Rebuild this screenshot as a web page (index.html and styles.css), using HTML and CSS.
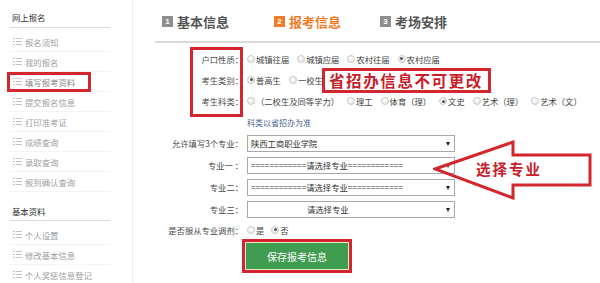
FILE: index.html
```html
<!DOCTYPE html>
<html lang="zh-CN">
<head>
<meta charset="utf-8">
<title>报考信息</title>
<link rel="stylesheet" href="styles.css">
</head>
<body>
<div class="page">
  <aside class="sidebar">
    <div class="side-head">网上报名</div>
    <ul class="side-list">
      <li class="side-item"><span class="si"><svg class="ic" viewBox="0 0 9 7"><rect x="0" y="0" width="2" height="1"/><rect x="0" y="3" width="2" height="1"/><rect x="0" y="6" width="2" height="1"/><rect x="3" y="0" width="6" height="1"/><rect x="3" y="3" width="6" height="1"/><rect x="3" y="6" width="6" height="1"/></svg>报名须知</span></li>
      <li class="side-item"><span class="si"><svg class="ic" viewBox="0 0 9 7"><rect x="0" y="0" width="2" height="1"/><rect x="0" y="3" width="2" height="1"/><rect x="0" y="6" width="2" height="1"/><rect x="3" y="0" width="6" height="1"/><rect x="3" y="3" width="6" height="1"/><rect x="3" y="6" width="6" height="1"/></svg>我的报名</span></li>
      <li class="side-item"><span class="si marked"><svg class="ic" viewBox="0 0 9 7"><rect x="0" y="0" width="2" height="1"/><rect x="0" y="3" width="2" height="1"/><rect x="0" y="6" width="2" height="1"/><rect x="3" y="0" width="6" height="1"/><rect x="3" y="3" width="6" height="1"/><rect x="3" y="6" width="6" height="1"/></svg>填写报考资料</span></li>
      <li class="side-item"><span class="si"><svg class="ic" viewBox="0 0 9 7"><rect x="0" y="0" width="2" height="1"/><rect x="0" y="3" width="2" height="1"/><rect x="0" y="6" width="2" height="1"/><rect x="3" y="0" width="6" height="1"/><rect x="3" y="3" width="6" height="1"/><rect x="3" y="6" width="6" height="1"/></svg>提交报名信息</span></li>
      <li class="side-item"><span class="si"><svg class="ic" viewBox="0 0 9 7"><rect x="0" y="0" width="2" height="1"/><rect x="0" y="3" width="2" height="1"/><rect x="0" y="6" width="2" height="1"/><rect x="3" y="0" width="6" height="1"/><rect x="3" y="3" width="6" height="1"/><rect x="3" y="6" width="6" height="1"/></svg>打印准考证</span></li>
      <li class="side-item"><span class="si"><svg class="ic" viewBox="0 0 9 7"><rect x="0" y="0" width="2" height="1"/><rect x="0" y="3" width="2" height="1"/><rect x="0" y="6" width="2" height="1"/><rect x="3" y="0" width="6" height="1"/><rect x="3" y="3" width="6" height="1"/><rect x="3" y="6" width="6" height="1"/></svg>成绩查询</span></li>
      <li class="side-item"><span class="si"><svg class="ic" viewBox="0 0 9 7"><rect x="0" y="0" width="2" height="1"/><rect x="0" y="3" width="2" height="1"/><rect x="0" y="6" width="2" height="1"/><rect x="3" y="0" width="6" height="1"/><rect x="3" y="3" width="6" height="1"/><rect x="3" y="6" width="6" height="1"/></svg>录取查询</span></li>
      <li class="side-item"><span class="si"><svg class="ic" viewBox="0 0 9 7"><rect x="0" y="0" width="2" height="1"/><rect x="0" y="3" width="2" height="1"/><rect x="0" y="6" width="2" height="1"/><rect x="3" y="0" width="6" height="1"/><rect x="3" y="3" width="6" height="1"/><rect x="3" y="6" width="6" height="1"/></svg>报到确认查询</span></li>
    </ul>
    <div class="side-head second">基本资料</div>
    <ul class="side-list">
      <li class="side-item"><span class="si"><svg class="ic" viewBox="0 0 9 7"><rect x="0" y="0" width="2" height="1"/><rect x="0" y="3" width="2" height="1"/><rect x="0" y="6" width="2" height="1"/><rect x="3" y="0" width="6" height="1"/><rect x="3" y="3" width="6" height="1"/><rect x="3" y="6" width="6" height="1"/></svg>个人设置</span></li>
      <li class="side-item"><span class="si"><svg class="ic" viewBox="0 0 9 7"><rect x="0" y="0" width="2" height="1"/><rect x="0" y="3" width="2" height="1"/><rect x="0" y="6" width="2" height="1"/><rect x="3" y="0" width="6" height="1"/><rect x="3" y="3" width="6" height="1"/><rect x="3" y="6" width="6" height="1"/></svg>修改基本信息</span></li>
      <li class="side-item"><span class="si"><svg class="ic" viewBox="0 0 9 7"><rect x="0" y="0" width="2" height="1"/><rect x="0" y="3" width="2" height="1"/><rect x="0" y="6" width="2" height="1"/><rect x="3" y="0" width="6" height="1"/><rect x="3" y="3" width="6" height="1"/><rect x="3" y="6" width="6" height="1"/></svg>个人奖惩信息登记</span></li>
    </ul>
  </aside>

  <main class="main">
    <div class="tabs">
      <div class="tab"><span class="badge">1</span>基本信息</div>
      <div class="tab active"><span class="badge">2</span>报考信息</div>
      <div class="tab"><span class="badge">3</span>考场安排</div>
    </div>

    <div class="form">
      <div class="row r21">
        <div class="lbl">户口性质：</div>
        <div class="ctl">
          <span class="opt"><i class="radio"></i>城镇往届</span>
          <span class="opt"><i class="radio"></i>城镇应届</span>
          <span class="opt"><i class="radio"></i>农村往届</span>
          <span class="opt"><i class="radio on"></i>农村应届</span>
        </div>
      </div>
      <div class="row r21">
        <div class="lbl">考生类别：</div>
        <div class="ctl">
          <span class="opt"><i class="radio on"></i>普高生</span>
          <span class="opt"><i class="radio"></i>一校生</span>
        </div>
      </div>
      <div class="row r22">
        <div class="lbl">考生科类：</div>
        <div class="ctl">
          <span class="opt"><i class="radio"></i>（二校生及同等学力）</span>
          <span class="opt"><i class="radio"></i>理工</span>
          <span class="opt"><i class="radio"></i>体育（理）</span>
          <span class="opt"><i class="radio on"></i>文史</span>
          <span class="opt"><i class="radio"></i>艺术（理）</span>
          <span class="opt"><i class="radio"></i>艺术（文）</span>
        </div>
      </div>
      <div class="row r20">
        <div class="lbl"></div>
        <div class="ctl"><span class="note">科类以省招办为准</span></div>
      </div>
      <div class="row r22">
        <div class="lbl">允许填写3个专业：</div>
        <div class="ctl"><div class="select">陕西工商职业学院</div></div>
      </div>
      <div class="row r22">
        <div class="lbl">专业一 ：</div>
        <div class="ctl"><div class="select">============请选择专业============</div></div>
      </div>
      <div class="row r22">
        <div class="lbl">专业二：</div>
        <div class="ctl"><div class="select">============请选择专业============</div></div>
      </div>
      <div class="row r22">
        <div class="lbl">专业三：</div>
        <div class="ctl"><div class="select mid">请选择专业</div></div>
      </div>
      <div class="row r19">
        <div class="lbl">是否服从专业调剂：</div>
        <div class="ctl">
          <span class="opt tight"><i class="radio"></i>是</span>
          <span class="opt tight"><i class="radio on"></i>否</span>
        </div>
      </div>
      <div class="actions">
        <div class="btn-frame"><button class="btn" type="button">保存报考信息</button></div>
      </div>
    </div>

    <div class="mark-labels"></div>
    <div class="callout">省招办信息不可更改</div>
    <svg class="arrow" viewBox="0 0 160 60" width="160" height="60"><polygon points="2,29 80,2 80,15 157,15 157,45 80,45 80,58" fill="none" stroke="#d3262e" stroke-width="3" stroke-linejoin="miter"/></svg>
    <div class="arrow-text">选择专业</div>
  </main>
</div>
</body>
</html>
```

FILE: styles.css
```css
* { box-sizing: border-box; }
html, body { margin: 0; padding: 0; background: #fff; }
body {
  font-family: "Noto Sans CJK SC", "Liberation Sans", sans-serif;
  color: #444;
  width: 600px;
  height: 283px;
  overflow: hidden;
}
.page { display: flex; height: 283px; }

/* sidebar */
.sidebar {
  width: 133px;
  flex: none;
  border-right: 1px solid #efefef;
  padding: 8px 0 0 10px;
}
.side-head {
  width: 100px;
  height: 20px;
  line-height: 19px;
  padding-left: 2px;
  font-size: 8.4px;
  color: #333;
  border-bottom: 1px solid #dcdcdc;
}
.side-head.second { margin-top: 10px; height: 19px; line-height: 18px; }
.side-list { list-style: none; margin: 4px 0 0; padding: 0; width: 100px; }
.side-item {
  height: 20px;
  display: flex;
  align-items: center;
  border-bottom: 1px solid #f4f4f4;
  font-size: 8.4px;
  color: #a0a0a0;
}
.si { display: inline-flex; align-items: center; height: 14px; padding-left: 3px; padding-right: 3px; }
.si.marked { outline: 3px solid #d3262e; width: 78px; color: #888; }
.ic { width: 9px; height: 7px; fill: #c4c4c4; margin-right: 3px; flex: none; }

/* main */
.main { flex: 1; position: relative; padding-left: 22px; }
.tabs {
  height: 43px;
  border-bottom: 2px solid #dadada;
  display: flex;
  align-items: center;
  padding-left: 7px;
  padding-top: 2px;
}
.tab {
  display: flex;
  align-items: center;
  width: 112px;
  font-size: 13px;
  font-weight: 700;
  color: #555;
}
.tab:last-child { width: auto; margin-left: -6px; }
.badge {
  width: 11px;
  height: 11px;
  background: #8e8e8e;
  color: #fff;
  font-size: 8px;
  line-height: 11px;
  text-align: center;
  margin-right: 4px;
  font-family: "Liberation Sans", sans-serif;
}
.tab.active { color: #ee7d2b; }
.tab.active .badge { background: #ee7d2b; }

.form { margin-top: 5px; }
.row { display: flex; align-items: center; }
.r19 { height: 19px; }
.r20 { height: 20px; }
.r21 { height: 21px; }
.r22 { height: 22px; }
.lbl {
  width: 92px;
  flex: none;
  text-align: right;
  padding-right: 4px;
  font-size: 8.3px;
  color: #4a4a4a;
  white-space: nowrap;
}
.ctl { display: flex; align-items: center; font-size: 8.3px; color: #444; white-space: nowrap; }
.opt { display: inline-flex; align-items: center; margin-right: 8px; }
.opt.tight { margin-right: 7px; }
.radio {
  width: 8px;
  height: 8px;
  border-radius: 50%;
  border: 1px solid #c9c9c9;
  background: radial-gradient(circle at 40% 35%, #fff, #e2e2e2);
  margin-right: 1px;
  display: inline-block;
  position: relative;
}
.radio.on::after {
  content: "";
  position: absolute;
  left: 1.5px; top: 1.5px;
  width: 3px; height: 3px;
  border-radius: 50%;
  background: #555;
}
.note { font-size: 8px; color: #4a6590; }
.select {
  width: 208px;
  height: 17px;
  border: 1px solid #a8a8a8;
  background: #fff;
  display: flex;
  align-items: center;
  padding-left: 3px;
  font-size: 8.3px;
  color: #333;
  position: relative;
}
.select.mid { padding-left: 59px; }
.select::after {
  content: "";
  position: absolute;
  right: 4px; top: 6px;
  border-left: 2.5px solid transparent;
  border-right: 2.5px solid transparent;
  border-top: 4px solid #222;
}
.actions { padding-left: 87px; }
.btn-frame {
  width: 110px;
  height: 34px;
  border: 3px solid #d3262e;
}
.btn {
  display: block;
  width: 100%;
  height: 100%;
  margin: 0;
  border: 1px solid #e8efc9;
  background: #3f9c50;
  color: #fff;
  font-family: "Noto Sans CJK SC", sans-serif;
  font-size: 10px;
  padding: 0;
}

/* annotations */
.mark-labels {
  position: absolute;
  left: 57px; top: 47px;
  width: 53px; height: 70px;
  border: 3px solid #d3262e;
}
.callout {
  position: absolute;
  left: 189px; top: 68px;
  width: 169px; height: 25px;
  border: 3px solid #d3262e;
  background: #fff;
  color: #c8202a;
  font-size: 15.5px;
  font-weight: 700;
  letter-spacing: 1.6px;
  line-height: 19px;
  padding-left: 4px;
  white-space: nowrap;
}
.arrow { position: absolute; left: 300px; top: 140px; }
.arrow-text {
  position: absolute;
  left: 343px; top: 159px;
  color: #c8202a;
  font-size: 14.5px;
  font-weight: 700;
  letter-spacing: 2px;
  line-height: 20px;
}
```
